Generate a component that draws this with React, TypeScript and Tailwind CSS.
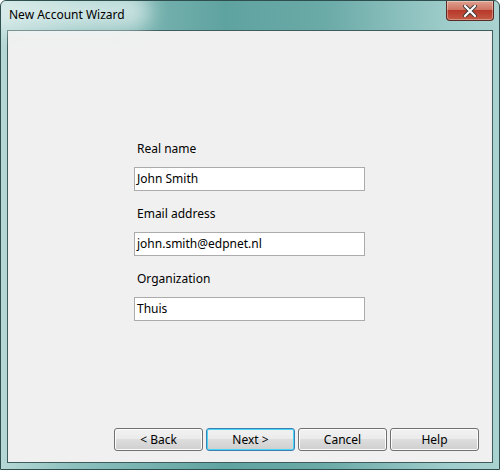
import React from "react";

const font = "font-['Noto_Sans',_'Liberation_Sans',_sans-serif]";

function Field({ label, value }: { label: string; value: string }) {
  return (
    <div className="flex flex-col">
      <label className="h-[16px] pl-[3px] text-[12px] leading-[16px] text-black">{label}</label>
      <div className="mt-[10px] flex h-[24px] w-[231px] items-center border border-[#ababab] bg-white pl-[2px] text-[12px] text-black">
        {value}
      </div>
    </div>
  );
}

function WinButton({ label, isDefault }: { label: string; isDefault?: boolean }) {
  return (
    <button
      className={
        "h-[23px] w-[89px] rounded-[3px] border text-[12px] text-black bg-[linear-gradient(#f2f2f2_0%,#ebebeb_45%,#dddddd_50%,#cfcfcf_100%)] " +
        (isDefault
          ? "border-[#3c7fb1] shadow-[inset_0_0_0_1px_#48d5f8]"
          : "border-[#707070] shadow-[inset_0_0_0_1px_#fcfcfc]")
      }
    >
      {label}
    </button>
  );
}

export default function App() {
  return (
    <div
      className={`${font} flex h-[470px] w-[500px] flex-col overflow-hidden rounded-t-[6px] border border-[#2f4f4f] bg-[linear-gradient(90deg,#b6d8d6_0%,#8cc0bd_15%,#5fa3a0_45%,#6aaaa7_65%,#9fcdcb_90%,#a9d2d0_100%)]`}
    >
      <div className="relative flex h-[29px] shrink-0 items-start">
        <div className="absolute left-[-20px] top-[-10px] h-[40px] w-[170px] rounded-full bg-[#e8f4f3] opacity-70 blur-[10px]" />
        <span className="relative ml-[8px] mt-[6px] text-[12px] leading-[16px] text-black">New Account Wizard</span>
        <div className="ml-auto mr-[5px] flex h-[20px] w-[48px] items-center justify-center rounded-b-[4px] border border-t-0 border-[#5a2a22] bg-[linear-gradient(#e0a090_0%,#cf7563_45%,#b8392a_50%,#c45a44_100%)] shadow-[inset_0_0_0_1px_rgba(255,255,255,0.35)]">
          <svg width="14" height="12" viewBox="0 0 14 12">
            <path d="M2 1 L12 11 M12 1 L2 11" stroke="#3b3b3b" strokeWidth="4" strokeLinecap="round" />
            <path d="M2 1 L12 11 M12 1 L2 11" stroke="#ffffff" strokeWidth="2.2" strokeLinecap="round" />
          </svg>
        </div>
      </div>
      <div className="flex flex-1 px-[6px] pb-[6px]">
        <div className="flex flex-1 flex-col border border-[#3d5c5b] bg-[#f0f0f0]">
          <div className="flex flex-col gap-[15px] pl-[126px] pt-[110px]">
            <Field label="Real name" value="John Smith" />
            <Field label="Email address" value="john.smith@edpnet.nl" />
            <Field label="Organization" value="Thuis" />
          </div>
          <div className="mt-auto flex justify-end gap-[3px] pb-[11px] pr-[13px]">
            <WinButton label="< Back" />
            <WinButton label="Next >" isDefault />
            <WinButton label="Cancel" />
            <WinButton label="Help" />
          </div>
        </div>
      </div>
    </div>
  );
}
